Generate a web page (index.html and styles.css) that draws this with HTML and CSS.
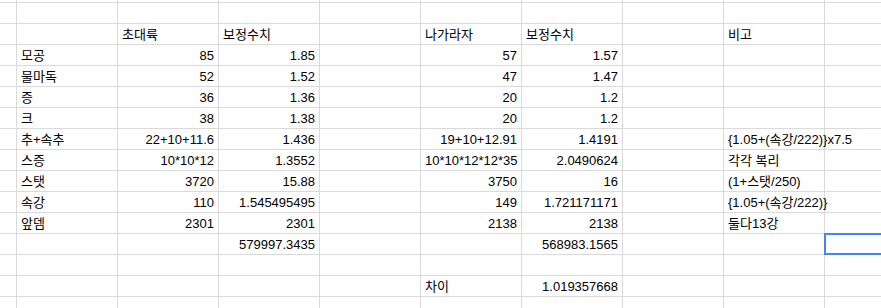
FILE: index.html
```html
<!DOCTYPE html>
<html lang="ko">
<head>
<meta charset="utf-8">
<link rel="stylesheet" href="styles.css">
</head>
<body>
<div class="sheet">
  <div class="c"></div><div class="c"></div><div class="c"></div><div class="c"></div><div class="c"></div><div class="c"></div><div class="c"></div><div class="c"></div><div class="c"></div><div class="c last"></div>

  <div class="c"></div><div class="c"></div><div class="c"></div><div class="c"></div><div class="c"></div><div class="c"></div><div class="c"></div><div class="c"></div><div class="c"></div><div class="c last"></div>

  <div class="c"></div><div class="c"></div><div class="c">초대륙</div><div class="c">보정수치</div><div class="c"></div><div class="c">나가라자</div><div class="c">보정수치</div><div class="c"></div><div class="c">비고</div><div class="c last"></div>

  <div class="c"></div><div class="c">모공</div><div class="c n">85</div><div class="c n">1.85</div><div class="c"></div><div class="c n">57</div><div class="c n">1.57</div><div class="c"></div><div class="c"></div><div class="c last"></div>

  <div class="c"></div><div class="c">물마독</div><div class="c n">52</div><div class="c n">1.52</div><div class="c"></div><div class="c n">47</div><div class="c n">1.47</div><div class="c"></div><div class="c"></div><div class="c last"></div>

  <div class="c"></div><div class="c">증</div><div class="c n">36</div><div class="c n">1.36</div><div class="c"></div><div class="c n">20</div><div class="c n">1.2</div><div class="c"></div><div class="c"></div><div class="c last"></div>

  <div class="c"></div><div class="c">크</div><div class="c n">38</div><div class="c n">1.38</div><div class="c"></div><div class="c n">20</div><div class="c n">1.2</div><div class="c"></div><div class="c"></div><div class="c last"></div>

  <div class="c"></div><div class="c">추+속추</div><div class="c n">22+10+11.6</div><div class="c n">1.436</div><div class="c"></div><div class="c n">19+10+12.91</div><div class="c n">1.4191</div><div class="c"></div><div class="c ov">{1.05+(속강/222)}x7.5</div><div class="c last"></div>

  <div class="c"></div><div class="c">스증</div><div class="c n">10*10*12</div><div class="c n">1.3552</div><div class="c"></div><div class="c n">10*10*12*12*35</div><div class="c n">2.0490624</div><div class="c"></div><div class="c">각각 복리</div><div class="c last"></div>

  <div class="c"></div><div class="c">스탯</div><div class="c n">3720</div><div class="c n">15.88</div><div class="c"></div><div class="c n">3750</div><div class="c n">16</div><div class="c"></div><div class="c">(1+스탯/250)</div><div class="c last"></div>

  <div class="c"></div><div class="c">속강</div><div class="c n">110</div><div class="c n">1.545495495</div><div class="c"></div><div class="c n">149</div><div class="c n">1.721171171</div><div class="c"></div><div class="c ov">{1.05+(속강/222)}</div><div class="c last"></div>

  <div class="c"></div><div class="c">앞뎀</div><div class="c n">2301</div><div class="c n">2301</div><div class="c"></div><div class="c n">2138</div><div class="c n">2138</div><div class="c"></div><div class="c">둘다13강</div><div class="c last"></div>

  <div class="c"></div><div class="c"></div><div class="c"></div><div class="c n">579997.3435</div><div class="c"></div><div class="c"></div><div class="c n">568983.1565</div><div class="c"></div><div class="c"></div><div class="c last sel"></div>

  <div class="c"></div><div class="c"></div><div class="c"></div><div class="c"></div><div class="c"></div><div class="c"></div><div class="c"></div><div class="c"></div><div class="c"></div><div class="c last"></div>

  <div class="c"></div><div class="c"></div><div class="c"></div><div class="c"></div><div class="c"></div><div class="c">차이</div><div class="c n">1.019357668</div><div class="c"></div><div class="c"></div><div class="c last"></div>

  <div class="c"></div><div class="c"></div><div class="c"></div><div class="c"></div><div class="c"></div><div class="c"></div><div class="c"></div><div class="c"></div><div class="c"></div><div class="c last"></div>
</div>
</body>
</html>
```
FILE: styles.css
```css
html, body {
  margin: 0;
  padding: 0;
  background: #fff;
  overflow: hidden;
}
.sheet {
  display: grid;
  grid-template-columns: 17px repeat(8, 101px) 56px;
  grid-template-rows: 3px;
  grid-auto-rows: 21px;
  width: 881px;
  height: 308px;
  overflow: hidden;
  font-family: "Liberation Sans", "Noto Sans CJK KR", sans-serif;
  font-size: 13px;
  color: #000;
}
.c {
  box-sizing: border-box;
  border-right: 1px solid #dadada;
  border-bottom: 1px solid #dadada;
  padding: 2px 3px 0 4px;
  line-height: 18px;
  white-space: nowrap;
  overflow: hidden;
}
.last { border-right: 0; }
.n { text-align: right; padding-right: 4px; }
.ov { overflow: visible; position: relative; z-index: 1; }
.sel { position: relative; overflow: visible; }
.sel::after {
  content: "";
  position: absolute;
  left: -1px;
  top: -1px;
  right: 0;
  bottom: -1px;
  border: 2px solid #4285f4;
  border-right: 0;
}
```
